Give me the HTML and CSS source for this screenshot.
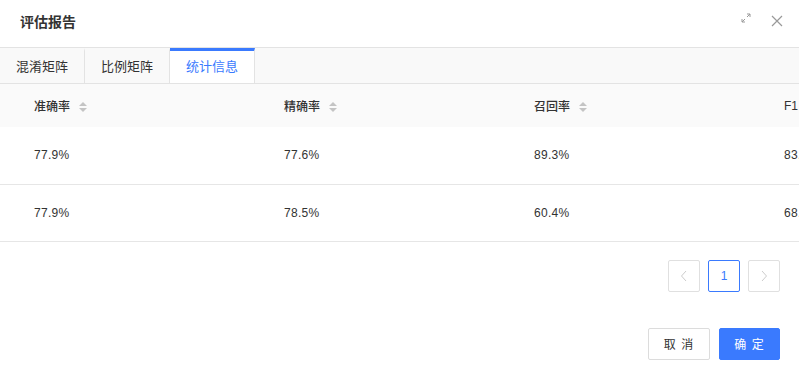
FILE: index.html
```html
<!DOCTYPE html>
<html lang="zh-CN">
<head>
  <meta charset="UTF-8" />
  <title>评估报告</title>
  <link rel="stylesheet" href="styles.css">
</head>
<body>

<div class="modal">
  <div class="modal-header">
    <span class="modal-title">评估报告</span>
    <div class="header-tools">
      <svg class="icon-max" width="10" height="10" viewBox="0 0 10 10">
        <path d="M6 1 H9 V4 M9 1 L6 4 M4 9 H1 V6 M1 9 L4 6" fill="none" stroke="#999" stroke-width="1"/>
      </svg>
      <svg class="icon-close" width="12" height="12" viewBox="0 0 12 12">
        <path d="M1 1 L11 11 M11 1 L1 11" fill="none" stroke="#999" stroke-width="1.2"/>
      </svg>
    </div>
  </div>

  <div class="tabs">
    <div class="tab">混淆矩阵</div>
    <div class="tab">比例矩阵</div>
    <div class="tab active">统计信息</div>
  </div>

  <div class="table-wrap">
    <table class="stats">
      <thead>
        <tr>
          <th>准确率 <span class="sorter"></span></th>
          <th>精确率 <span class="sorter"></span></th>
          <th>召回率 <span class="sorter"></span></th>
          <th>F1 <span class="sorter"></span></th>
        </tr>
      </thead>
      <tbody>
        <tr><td>77.9%</td><td>77.6%</td><td>89.3%</td><td>83.0%</td></tr>
        <tr><td>77.9%</td><td>78.5%</td><td>60.4%</td><td>68.3%</td></tr>
      </tbody>
    </table>
  </div>

  <div class="pager">
    <button class="page-btn disabled">
      <svg width="8" height="12" viewBox="0 0 8 12"><path d="M6 1 L1.5 6 L6 11" fill="none" stroke="#ccc" stroke-width="1"/></svg>
    </button>
    <button class="page-btn current">1</button>
    <button class="page-btn disabled">
      <svg width="8" height="12" viewBox="0 0 8 12"><path d="M2 1 L6.5 6 L2 11" fill="none" stroke="#ccc" stroke-width="1"/></svg>
    </button>
  </div>

  <div class="modal-footer">
    <button class="btn">取 消</button>
    <button class="btn primary">确 定</button>
  </div>
</div>

</body>
</html>
```

FILE: styles.css
```css
* { box-sizing: border-box; }
body {
  margin: 0;
  font-family: "Liberation Sans", "Noto Sans CJK SC", sans-serif;
  color: #333;
  background: #fff;
  overflow: hidden;
}
.modal { width: 799px; height: 374px; overflow: hidden; }

.modal-header {
  height: 47px;
  padding: 0 16px 6px 20px;
  display: flex;
  align-items: center;
  justify-content: space-between;
}
.modal-title { font-size: 14px; font-weight: bold; color: #333; }
.header-tools { display: flex; align-items: center; gap: 20px; }
.icon-max { margin-bottom: 6px; }

.tabs {
  display: flex;
  height: 37px;
  border-top: 1px solid #e3e3e3;
  border-bottom: 1px solid #e3e3e3;
  background: #f9f9f9;
}
.tab {
  width: 85px;
  padding-left: 16px;
  font-size: 13px;
  color: #333;
  border-right: 1px solid #e3e3e3;
  border-top: 3px solid transparent;
  line-height: 32px;
}
.tab.active {
  background: #fff;
  color: #3a7afe;
  border-top-color: #3a7afe;
}

.table-wrap { overflow: hidden; }
.stats {
  border-collapse: collapse;
  table-layout: fixed;
  width: 1000px;
  font-size: 12px;
}
.stats th, .stats td {
  width: 250px;
  text-align: left;
  padding: 0 0 0 34px;
  white-space: nowrap;
}
.stats th {
  height: 43px;
  background: #fafafa;
  font-weight: 500;
  color: #333;
}
.stats td {
  height: 57px;
  border-bottom: 1px solid #e6e6e6;
  color: #333;
  letter-spacing: 0.3px;
}
.sorter {
  display: inline-block;
  position: relative;
  width: 8px;
  height: 10px;
  margin-left: 6px;
  vertical-align: -1px;
}
.sorter::before, .sorter::after {
  content: "";
  position: absolute;
  left: 0;
  border-left: 4px solid transparent;
  border-right: 4px solid transparent;
}
.sorter::before { top: 0; border-bottom: 4px solid #c4c4c4; }
.sorter::after { bottom: 0; border-top: 4px solid #c4c4c4; }

.pager {
  display: flex;
  justify-content: flex-end;
  gap: 8px;
  padding: 18px 19px 0 0;
}
.page-btn {
  width: 32px;
  height: 32px;
  border: 1px solid #e0e0e0;
  border-radius: 2px;
  background: #fff;
  font-family: inherit;
  font-size: 12px;
  color: #3a7afe;
  display: flex;
  align-items: center;
  justify-content: center;
  padding: 0;
}
.page-btn.current { border-color: #3a7afe; }

.modal-footer {
  display: flex;
  justify-content: flex-end;
  gap: 9px;
  padding: 36px 19px 0 0;
}
.btn {
  width: 62px;
  height: 32px;
  border: 1px solid #dcdcdc;
  border-radius: 2px;
  background: #fff;
  font-family: inherit;
  font-size: 12px;
  color: #333;
  padding: 0;
  letter-spacing: 1px;
}
.btn.primary {
  width: 61px;
  background: #3a7afe;
  border-color: #3a7afe;
  color: #fff;
}
```
